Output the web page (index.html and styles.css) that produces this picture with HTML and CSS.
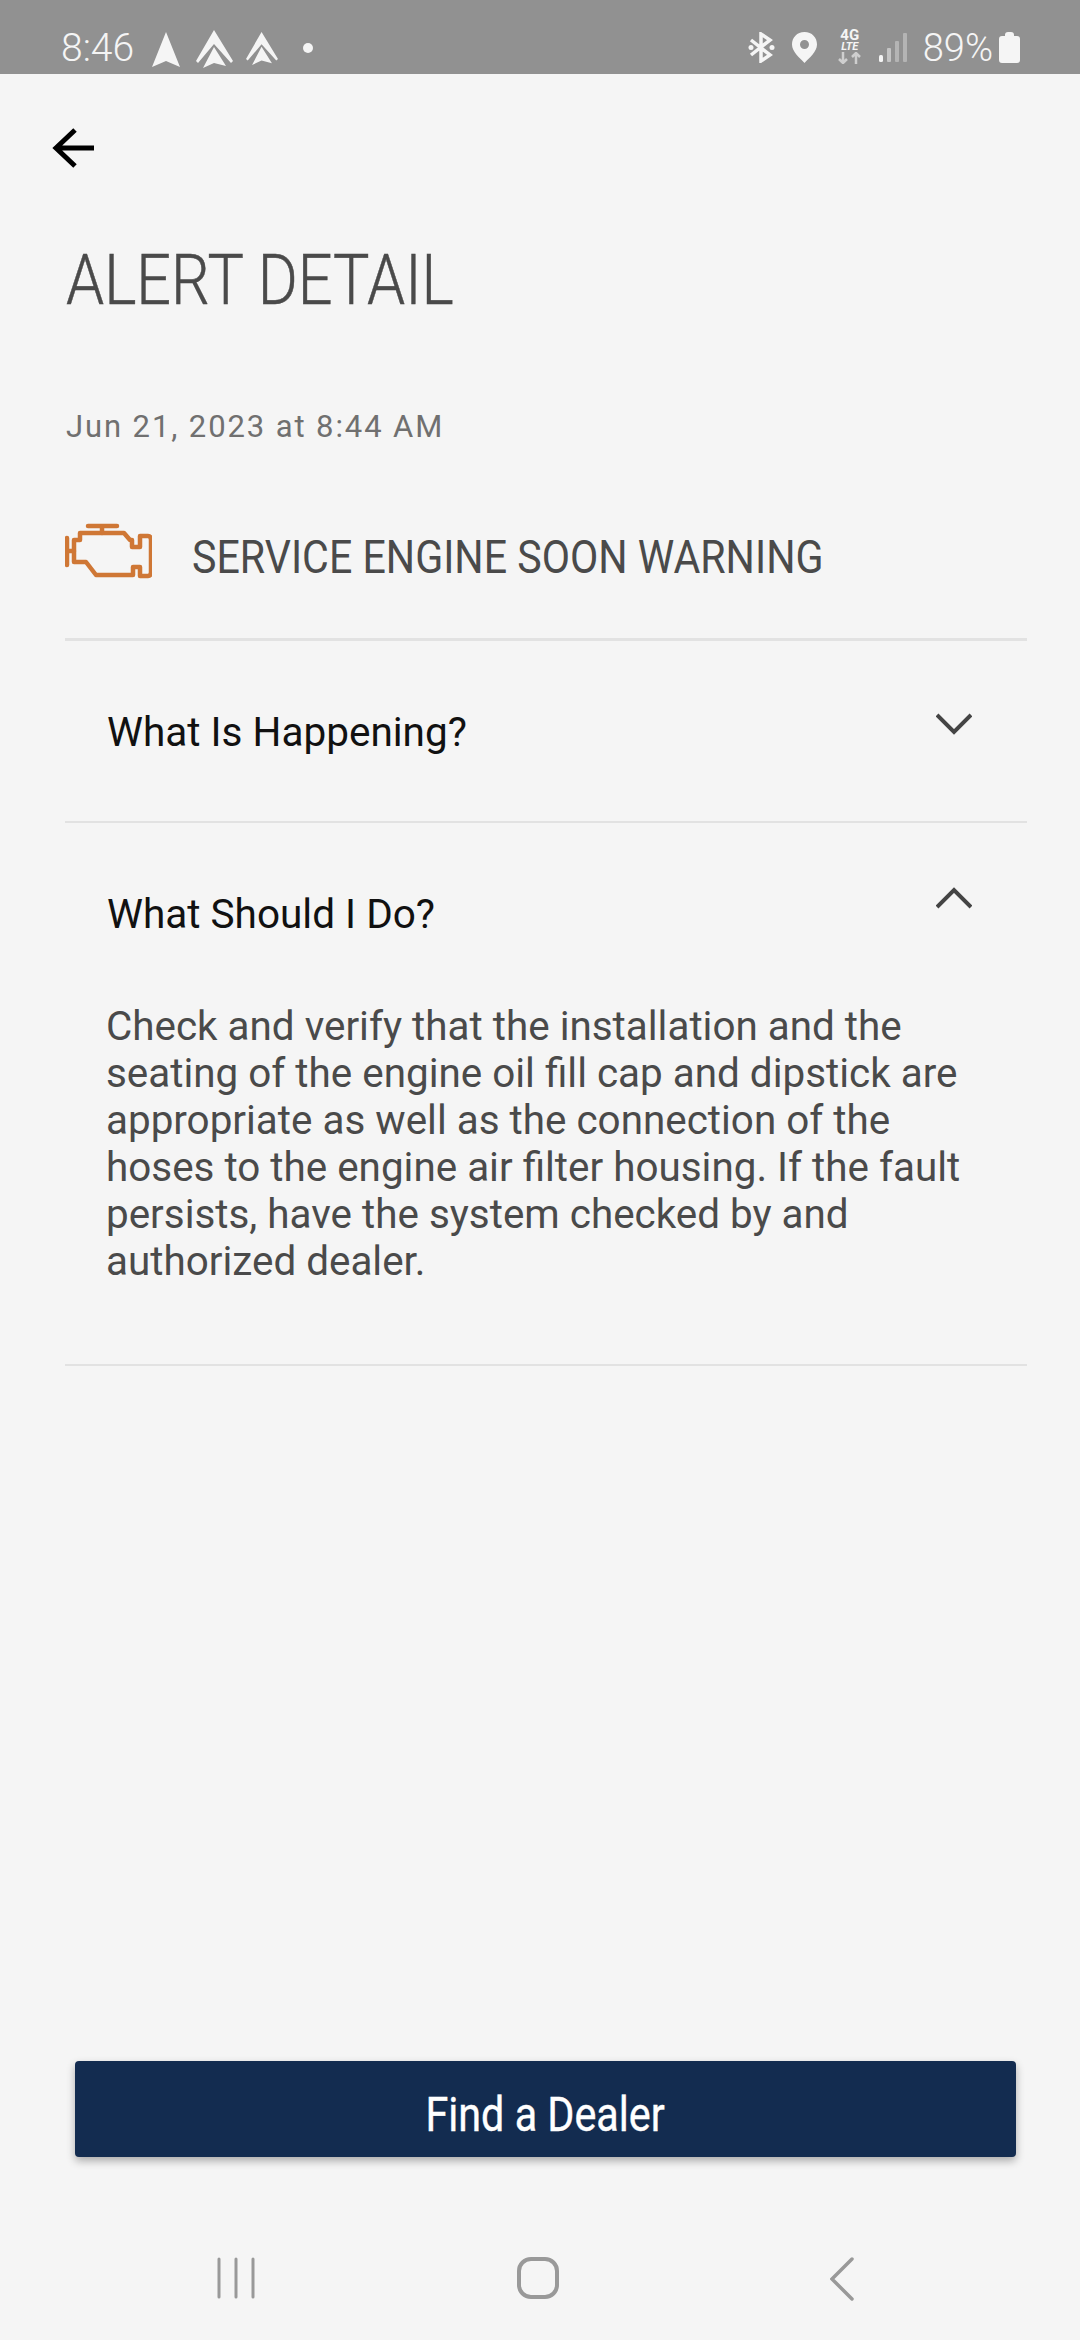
FILE: index.html
```html
<!DOCTYPE html>
<html lang="en">
<head>
    <meta charset="UTF-8">
    <title>Alert Detail</title>
    <link rel="stylesheet" href="styles.css">
</head>
<body>
    <div class="status-bar">
        <span class="status-time">8:46</span>
        <svg class="nav-one" viewBox="0 0 28 36"><path d="M14 0 L28 35 L14 29 L0 35 Z" fill="#f5f5f5"/></svg>
        <svg class="nav-two" viewBox="0 0 37 38"><path d="M18 0 L37 31 L35 33 L18 14 L2 33 L0 31 Z" fill="#f5f5f5"/><path d="M18 17 L30 36 L18 33 L7 38 Z" fill="#f5f5f5"/></svg>
        <svg class="nav-three" viewBox="0 0 37 38"><path d="M18 0 L37 31 L35 33 L18 14 L2 33 L0 31 Z" fill="#f5f5f5"/><path d="M18 17 L30 36 L18 33 L7 38 Z" fill="#f5f5f5"/></svg>
        <span class="status-dot"></span>
        <div class="status-right">
            <svg class="bt" viewBox="0 0 27 31" fill="none" stroke="#f5f5f5" stroke-width="3.500"><path d="M3 8 L22 23 L13 29 V2 L22 8 L3 23"/><circle cx="3" cy="15.500" r="2.500" fill="#f5f5f5" stroke="none"/><circle cx="24" cy="15.500" r="2.500" fill="#f5f5f5" stroke="none"/></svg>
            <svg class="pin" viewBox="0 0 25 31"><path fill-rule="evenodd" d="M12.500 0 C20 0 25 5.500 25 12.500 C25 20 17 26 12.500 31 C8 26 0 20 0 12.500 C0 5.500 5 0 12.500 0 Z M12.500 8 A4.500 4.500 0 1 0 12.500 17 A4.500 4.500 0 1 0 12.500 8 Z" fill="#f5f5f5"/></svg>
            <div class="lte">
                <span class="lte-text">4G<br>LTE</span>
                <svg viewBox="0 0 25 12" fill="none" stroke="#cfcfcf" stroke-width="2.500"><path d="M6 0 V11 M2 7 L6 11 L10 7 M19 12 V1 M15 5 L19 1 L23 5"/></svg>
            </div>
            <svg class="signal" viewBox="0 0 28 29"><rect x="0" y="22" width="4" height="7" rx="1.500" fill="#f5f5f5"/><rect x="8" y="15" width="4" height="14" rx="1" fill="#c4c4c4"/><rect x="16" y="8" width="4" height="21" rx="1" fill="#b4b4b4"/><rect x="24" y="0" width="4" height="29" rx="1" fill="#b4b4b4"/></svg>
            <span class="status-battery">89%</span>
            <svg class="battery" viewBox="0 0 21 31"><path d="M6 3 Q6 0 9 0 H12 Q15 0 15 3 V4 H18 Q21 4 21 7 V28 Q21 31 18 31 H3 Q0 31 0 28 V7 Q0 4 3 4 H6 Z" fill="#f5f5f5"/></svg>
        </div>
    </div>

    <div class="page">
        <div class="toolbar">
            <svg class="back-arrow" viewBox="0 0 42 40" fill="none" stroke="#000" stroke-width="5"><path d="M42 20 H3 M23 2 L4 20 L23 38"/></svg>
        </div>

        <h1 class="title">ALERT DETAIL</h1>
        <p class="date">Jun 21, 2023 at 8:44 AM</p>

        <div class="alert-row">
            <svg class="engine" viewBox="0 0 87 56" fill="none" stroke="#cf7735" stroke-width="4.500" stroke-linejoin="round" stroke-linecap="round">
                <path d="M23 3 H52 M37 3 V10"/>
                <path d="M2 15 V42 M2 28 H9"/>
                <path d="M9 17 H15 V10 H59 L65 17 H67 V24 H75 V13 H83 Q86 13 86 17 V49 Q86 53 83 53 H75 V44 H68 V52 H31 L21 39 H9 Z"/>
            </svg>
            <h2 class="alert-name">SERVICE ENGINE SOON WARNING</h2>
        </div>

        <div class="acc-item">
            <div class="acc-head">
                <span class="acc-label">What Is Happening?</span>
                <svg class="chevron" viewBox="0 0 36 22" fill="none" stroke="#444" stroke-width="4"><path d="M1 2 L18 19 L35 2"/></svg>
            </div>
        </div>

        <div class="acc-item open">
            <div class="acc-head">
                <span class="acc-label">What Should I Do?</span>
                <svg class="chevron" viewBox="0 0 36 22" fill="none" stroke="#444" stroke-width="4"><path d="M1 20 L18 3 L35 20"/></svg>
            </div>
            <p class="acc-body">Check and verify that the installation and the seating of the engine oil fill cap and dipstick are appropriate as well as the connection of the hoses to the engine air filter housing. If the fault persists, have the system checked by and authorized dealer.</p>
        </div>

        <button class="dealer-btn"><span>Find a Dealer</span></button>
    </div>

    <div class="nav-bar">
        <svg class="nav-recents" viewBox="0 0 38 42" fill="none" stroke="#999" stroke-width="3" stroke-linecap="round"><path d="M2 2 V40 M19 2 V40 M36 2 V40"/></svg>
        <svg class="nav-home" viewBox="0 0 42 42" fill="none" stroke="#999" stroke-width="4"><rect x="2" y="2" width="38" height="38" rx="12"/></svg>
        <svg class="nav-back" viewBox="0 0 24 44" fill="none" stroke="#999" stroke-width="3.500" stroke-linecap="round"><path d="M22 2 L2 22 L22 42"/></svg>
    </div>
</body>
</html>
```

FILE: styles.css
```css
* {
    box-sizing: border-box;
}

body {
    font-family: Roboto, sans-serif;
    background: #f5f5f5;
    margin: 0;
    width: 1080px;
    height: 2340px;
    display: flex;
    flex-direction: column;
    overflow: hidden;
}

/* status bar */
.status-bar {
    height: 74px;
    flex: none;
    background: #919191;
    display: flex;
    align-items: flex-start;
    padding: 30px 60px 0 61px;
    color: #f5f5f5;
}

.status-time {
    font-size: 39px;
    font-weight: 300;
    line-height: 36px;
    width: 72px;
}

.nav-one {
    width: 28px;
    height: 36px;
    margin: 2px 0 0 19px;
}

.nav-two {
    width: 37px;
    height: 38px;
    margin-left: 16px;
}

.nav-three {
    width: 32px;
    height: 33px;
    margin: 2px 0 0 13px;
}

.status-dot {
    width: 10px;
    height: 10px;
    border-radius: 50%;
    background: #f5f5f5;
    margin: 13px 0 0 25px;
}

.status-right {
    margin-left: auto;
    display: flex;
    align-items: flex-start;
}

.bt {
    width: 27px;
    height: 31px;
    margin-top: 2px;
}

.pin {
    width: 25px;
    height: 31px;
    margin: 2px 0 0 17px;
}

.lte {
    width: 26px;
    margin-left: 20px;
    display: flex;
    flex-direction: column;
    align-items: center;
}

.lte-text {
    font-size: 11px;
    font-style: italic;
    font-weight: 700;
    line-height: 11px;
    text-align: center;
    color: #f5f5f5;
}

.lte-text::first-line {
    font-size: 15px;
    font-style: normal;
}

.lte svg {
    width: 25px;
    height: 12px;
    display: block;
}

.signal {
    width: 28px;
    height: 29px;
    margin: 3px 0 0 16px;
}

.status-battery {
    font-size: 38px;
    font-weight: 300;
    line-height: 36px;
    margin-left: 16px;
}

.battery {
    width: 21px;
    height: 31px;
    margin: 2px 0 0 6px;
}

/* page */
.page {
    flex: 1;
    display: flex;
    flex-direction: column;
    padding: 0 53px 0 65px;
}

.toolbar {
    height: 146px;
    flex: none;
}

.back-arrow {
    width: 42px;
    height: 40px;
    margin: 54px 0 0 -13px;
    display: block;
}

.title {
    font-size: 71px;
    font-weight: 300;
    line-height: 80px;
    color: #4a4a4a;
    margin: 20px 0 0 1px;
    -webkit-text-stroke: 0.5px #4a4a4a;
    transform: scaleX(0.86);
    transform-origin: left;
    white-space: nowrap;
}

.date {
    font-size: 31px;
    font-weight: 400;
    line-height: 36px;
    letter-spacing: 1.900px;
    color: #707070;
    margin: 89px 0 0 1px;
}

.alert-row {
    height: 196px;
    display: flex;
    align-items: flex-start;
    border-bottom: 3px solid #e2e2e2;
}

.engine {
    width: 87px;
    height: 56px;
    flex: none;
    margin-top: 78px;
}

.alert-name {
    font-size: 47px;
    font-weight: 400;
    line-height: 56px;
    color: #4a4a4a;
    margin: 84px 0 0 40px;
    transform: scaleX(0.875);
    transform-origin: left;
    white-space: nowrap;
}

.acc-item {
    border-bottom: 2px solid #e2e2e2;
}

.acc-head {
    height: 180px;
    padding: 1px 55px 0 42px;
    display: flex;
    align-items: center;
    justify-content: space-between;
}

.acc-label {
    font-size: 40.500px;
    color: #111;
}

.chevron {
    width: 36px;
    height: 22px;
    margin-bottom: 15px;
}

.acc-body {
    font-size: 40.400px;
    line-height: 47px;
    color: #4a4a4a;
    margin: 0;
    padding: 0 38px 0 41px;
    height: 361px;
}

.acc-item.open .acc-head {
    height: 180px;
    align-items: flex-start;
    padding-top: 64px;
}

.acc-item.open .acc-label {
    margin-top: 3px;
}

/* footer */
.dealer-btn {
    margin: auto 11px 0 10px;
    height: 96px;
    flex: none;
    background: #132c50;
    color: #fff;
    border: none;
    border-radius: 4px;
    box-shadow: 0 4px 8px rgba(0, 0, 0, 0.3);
    font-family: Roboto, sans-serif;
    font-size: 48px;
    padding: 10px 0 0;
    -webkit-text-stroke: 0.4px #fff;
}

.dealer-btn span {
    display: inline-block;
    transform: scaleX(0.86);
}

.nav-bar {
    height: 183px;
    flex: none;
    position: relative;
}

.nav-recents,
.nav-home,
.nav-back {
    position: absolute;
    top: 100px;
}

.nav-recents {
    left: 217px;
    width: 38px;
    height: 42px;
}

.nav-home {
    left: 517px;
    width: 42px;
    height: 42px;
}

.nav-back {
    left: 830px;
    width: 24px;
    height: 44px;
}
```
